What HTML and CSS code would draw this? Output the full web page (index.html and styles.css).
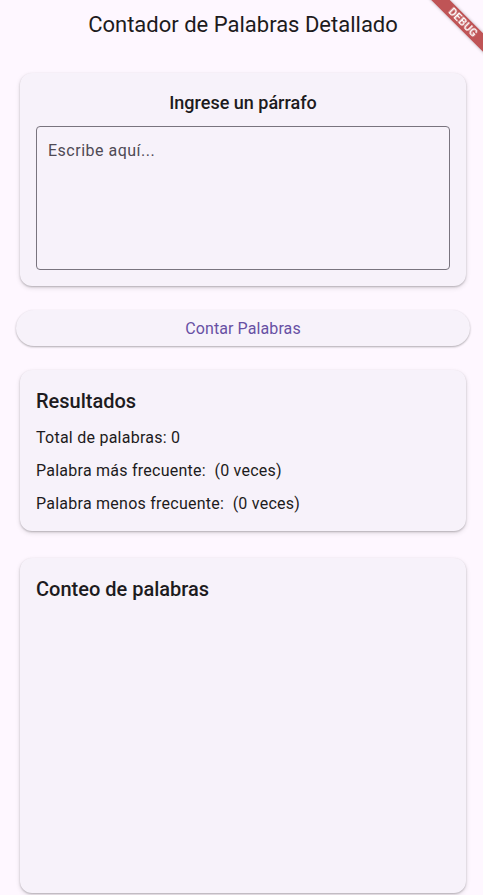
FILE: index.html
```html
<!DOCTYPE html>
<html lang="es">
<head>
<meta charset="utf-8">
<title>Contador de Palabras Detallado</title>
<link rel="stylesheet" href="styles.css">
</head>
<body>
<header class="appbar">
  <h1 class="appbar-title">Contador de Palabras Detallado</h1>
</header>
<main class="content">
  <section class="card card-input">
    <h2 class="input-title">Ingrese un párrafo</h2>
    <div class="textfield">
      <span class="placeholder">Escribe aquí...</span>
    </div>
  </section>
  <button class="count-btn" type="button">Contar Palabras</button>
  <section class="card card-results">
    <h2 class="card-title">Resultados</h2>
    <p class="result-line">Total de palabras: 0</p>
    <p class="result-line">Palabra más frecuente:  (0 veces)</p>
    <p class="result-line">Palabra menos frecuente:  (0 veces)</p>
  </section>
  <section class="card card-count">
    <h2 class="card-title">Conteo de palabras</h2>
  </section>
</main>
<div class="debug-banner">DEBUG</div>
</body>
</html>
```
FILE: styles.css
```css
* { box-sizing: border-box; }
html, body { margin: 0; padding: 0; }
body {
  width: 483px;
  height: 895px;
  overflow: hidden;
  background: #fef7ff;
  color: #1d1b20;
  font-family: Roboto, "Noto Sans", sans-serif;
  display: flex;
  flex-direction: column;
}
.appbar {
  height: 50px;
  flex: none;
  display: flex;
  align-items: center;
  justify-content: center;
  padding-left: 3px;
}
.appbar-title {
  margin: 0;
  font-size: 22px;
  font-weight: 400;
  line-height: 28px;
  color: #1d1b20;
}
.content {
  flex: 1;
  display: flex;
  flex-direction: column;
  padding: 23px 13px 2px 16px;
  min-height: 0;
}
.card {
  margin: 0 4px;
  background: #f7f2fa;
  border-radius: 12px;
  box-shadow: 0 1px 2px rgba(0,0,0,0.22), 0 2px 5px rgba(0,0,0,0.12);
  padding: 16px;
}
.card-input { display: flex; flex-direction: column; }
.input-title {
  margin: 0 0 9px;
  text-align: center;
  font-size: 18px;
  font-weight: 500;
  line-height: 28px;
}
.textfield {
  height: 144px;
  border: 1px solid #79747e;
  border-radius: 4px;
  padding: 12px 11px;
}
.placeholder {
  font-size: 16px;
  line-height: 24px;
  letter-spacing: 0.5px;
  color: #4f4a55;
}
.count-btn {
  margin-top: 24px;
  height: 36px;
  border: 0;
  border-radius: 18px;
  background: #f7f2fa;
  color: #6750a4;
  font-family: Roboto, "Noto Sans", sans-serif;
  font-size: 16px;
  font-weight: 400;
  letter-spacing: 0.1px;
  box-shadow: 0 1px 2px rgba(0,0,0,0.25), 0 1px 3px rgba(0,0,0,0.08);
}
.card-results { margin-top: 24px; padding-bottom: 15px; }
.card-title {
  margin: 0 0 10px;
  font-size: 20px;
  font-weight: 500;
  line-height: 30px;
}
.result-line {
  margin: 0;
  font-size: 16px;
  line-height: 24px;
  letter-spacing: 0.25px;
  white-space: pre-wrap;
}
.result-line + .result-line { margin-top: 9px; }
.card-count { margin-top: 27px; flex: 1; }
.debug-banner {
  position: fixed;
  left: 421px;
  top: 16px;
  width: 84px;
  height: 13px;
  transform: rotate(45deg);
  background: rgba(170, 30, 30, 0.75);
  color: #fff;
  font-family: Roboto, "Noto Sans", sans-serif;
  font-size: 11px;
  font-weight: 700;
  line-height: 13px;
  text-align: center;
  letter-spacing: 0.2px;
  box-shadow: 0 0 3px rgba(0,0,0,0.3);
}
```
